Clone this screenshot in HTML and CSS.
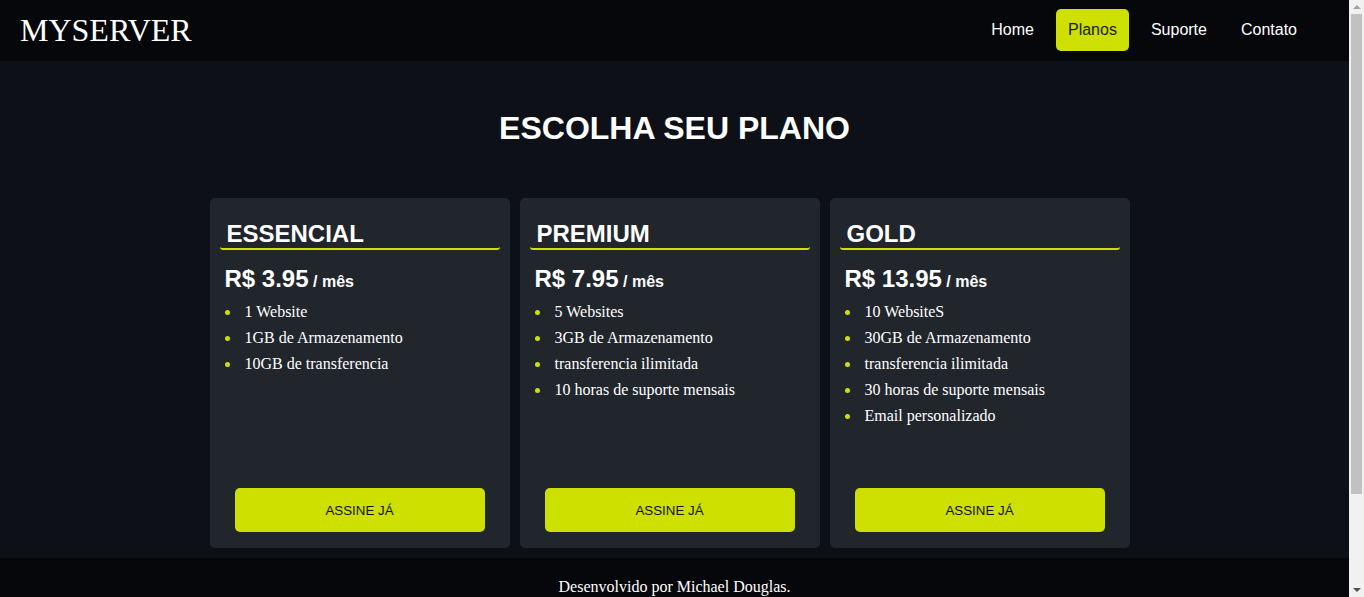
FILE: index.html
```html
<!DOCTYPE html>
<html lang="pt-BR">
<head>
<meta charset="utf-8">
<title>MYSERVER - Planos</title>
<link rel="stylesheet" href="styles.css">
</head>
<body>
<div class="page">
  <header class="topbar">
    <div class="logo">MYSERVER</div>
    <nav class="nav">
      <a class="nav-link" href="#">Home</a>
      <a class="nav-link active" href="#">Planos</a>
      <a class="nav-link" href="#">Suporte</a>
      <a class="nav-link" href="#">Contato</a>
    </nav>
  </header>
  <main class="main">
    <h1 class="title">ESCOLHA SEU PLANO</h1>
    <section class="plans">
      <article class="card">
        <h2 class="card-title">ESSENCIAL</h2>
        <p class="price">R$ 3.95<span class="per"> / mês</span></p>
        <ul class="features">
          <li>1 Website</li>
          <li>1GB de Armazenamento</li>
          <li>10GB de transferencia</li>
        </ul>
        <button class="buy">ASSINE JÁ</button>
      </article>
      <article class="card">
        <h2 class="card-title">PREMIUM</h2>
        <p class="price">R$ 7.95<span class="per"> / mês</span></p>
        <ul class="features">
          <li>5 Websites</li>
          <li>3GB de Armazenamento</li>
          <li>transferencia ilimitada</li>
          <li>10 horas de suporte mensais</li>
        </ul>
        <button class="buy">ASSINE JÁ</button>
      </article>
      <article class="card">
        <h2 class="card-title">GOLD</h2>
        <p class="price">R$ 13.95<span class="per"> / mês</span></p>
        <ul class="features">
          <li>10 WebsiteS</li>
          <li>30GB de Armazenamento</li>
          <li>transferencia ilimitada</li>
          <li>30 horas de suporte mensais</li>
          <li>Email personalizado</li>
        </ul>
        <button class="buy">ASSINE JÁ</button>
      </article>
    </section>
  </main>
  <footer class="footer">
    <p class="credit">Desenvolvido por Michael Douglas.</p>
  </footer>
</div>
<div class="scrollbar" aria-hidden="true">
  <div class="sb-arrow sb-up"></div>
  <div class="sb-track"><div class="sb-thumb"></div></div>
  <div class="sb-arrow sb-down"></div>
</div>
</body>
</html>
```
FILE: styles.css
```css
* { box-sizing: border-box; }

html { overflow: hidden; }

body {
  margin: 0;
  background: #05070b;
  color: #ffffff;
  font-family: "Liberation Serif", "Times New Roman", serif;
}

.page {
  margin-right: 15px;
}

.topbar {
  height: 61px;
  background: #05070b;
  display: flex;
  align-items: center;
  justify-content: space-between;
  padding: 0 40px 0 20px;
}

.logo {
  font-family: "Liberation Serif", "Times New Roman", serif;
  font-size: 32px;
  line-height: normal;
  color: #ffffff;
}

.nav {
  display: flex;
  gap: 10px;
  margin-top: -2px;
}

.nav-link {
  font-family: "Liberation Sans", Arial, sans-serif;
  font-size: 16px;
  line-height: 18px;
  color: #ffffff;
  text-decoration: none;
  padding: 12px 12px;
  border-radius: 5px;
}

.nav-link.active {
  background: #cde000;
  color: #1a1a1a;
}

.main {
  background: #0d1117;
  padding: 49px 0 10px;
}

.title {
  margin: 0 0 51px;
  text-align: center;
  font-family: "Liberation Sans", Arial, sans-serif;
  font-weight: bold;
  font-size: 32px;
  line-height: normal;
}

.plans {
  display: flex;
  justify-content: center;
}

.card {
  width: 300px;
  height: 350px;
  margin-right: 10px;
  background: #21262d;
  border-radius: 5px;
  padding: 22px 10px 16px;
  display: flex;
  flex-direction: column;
}

.card-title {
  margin: 0;
  padding: 0 6px 0 7px;
  font-family: "Liberation Sans", Arial, sans-serif;
  font-weight: bold;
  font-size: 24px;
  line-height: normal;
  border-bottom: 2px solid #cde000;
  border-radius: 0 0 3px 3px;
}

.price {
  margin: 15px 0 0;
  padding-left: 5px;
  font-family: "Liberation Sans", Arial, sans-serif;
  font-weight: bold;
  font-size: 24px;
  line-height: normal;
}

.per {
  font-size: 16px;
}

.features {
  list-style: none;
  margin: 6px 0 0;
  padding: 0 0 0 5px;
  flex: 1;
}

.features li {
  display: flex;
  align-items: center;
  font-size: 16px;
  line-height: 26px;
}

.features li::before {
  content: "";
  width: 5px;
  height: 5px;
  border-radius: 50%;
  background: #cde000;
  margin-right: 15px;
  flex: none;
}

.buy {
  align-self: center;
  width: 250px;
  height: 44px;
  border: none;
  border-radius: 5px;
  background: #cde000;
  color: #111111;
  font-family: "Liberation Sans", Arial, sans-serif;
  font-size: 13.333px;
  cursor: pointer;
}

.footer {
  background: #05070b;
  padding: 20px 0 0;
  min-height: 147px;
}

.credit {
  margin: 0;
  text-align: center;
  font-size: 16px;
  line-height: normal;
}

/* simulated browser scrollbar */
.scrollbar {
  position: fixed;
  top: 0;
  right: 0;
  width: 15px;
  height: 100vh;
  background: #f1f1f1;
  display: flex;
  flex-direction: column;
}

.sb-arrow {
  height: 14px;
  flex: none;
  display: flex;
  align-items: center;
  justify-content: center;
}

.sb-up::before,
.sb-down::before {
  content: "";
  width: 0;
  height: 0;
  border-left: 4px solid transparent;
  border-right: 4px solid transparent;
}

.sb-up::before {
  border-bottom: 4px solid #a3a3a3;
}

.sb-down::before {
  border-top: 4px solid #505050;
}

.sb-track {
  flex: 1;
  padding: 0 2px;
}

.sb-thumb {
  height: 480px;
  background: #c1c1c1;
}
```
